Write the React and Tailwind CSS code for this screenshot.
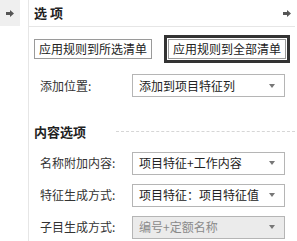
import React from "react";

const font = { fontFamily: '"Noto Sans CJK SC", "Noto Sans", sans-serif' };

function Arrow({ className }) {
  return (
    <svg width="8" height="7" viewBox="0 0 8 7" className={className}>
      <path d="M0 2h4V0l4 3.5L4 7V5H0z" fill="#555" />
    </svg>
  );
}

function Select({ value, disabled }) {
  return (
    <div
      className={`flex items-center w-[153px] h-[23px] border border-[#b5b5b5] pl-[6px] pr-[9px] ${
        disabled ? "bg-[#ebebeb] text-[#8a8a8a]" : "bg-white text-[#222]"
      }`}
    >
      <span className="flex-1 text-[12px] leading-none whitespace-nowrap">{value}</span>
      <svg width="6" height="4" viewBox="0 0 6 4">
        <path d="M0 0h6L3 4z" fill="#777" />
      </svg>
    </div>
  );
}

function Row({ label, value, disabled }) {
  return (
    <div className="flex items-center h-[23px]">
      <span className="w-[103px] pl-[11px] text-[12px] text-[#333] whitespace-nowrap">{label}</span>
      <Select value={value} disabled={disabled} />
    </div>
  );
}

export default function App() {
  return (
    <div className="w-[297px] h-[241px] bg-white flex overflow-hidden" style={font}>
      <div className="w-[28px] shrink-0">
        <div className="w-[20px] h-[26px] bg-[#efefef] flex items-center justify-center">
          <Arrow />
        </div>
      </div>
      <div className="flex-1 border-l border-[#e6e6e6] flex flex-col">
        <div className="h-[27px] flex items-center border-b border-[#e6e6e6] pl-[5px] pr-[4px] mr-[2px]">
          <span className="flex-1 text-[13px] font-bold text-[#222] tracking-[3px]">选项</span>
          <Arrow />
        </div>
        <div className="flex items-center pl-[5px] mt-[8px] gap-[12px]">
          <div className="h-[20px] px-[4px] border border-[#9a9a9a] bg-white flex items-center text-[12px] text-[#222] whitespace-nowrap">
            应用规则到所选清单
          </div>
          <div className="border-[3px] border-[#333] p-[1px]">
            <div className="h-[20px] px-[4px] border border-[#9a9a9a] bg-white flex items-center text-[12px] text-[#222] whitespace-nowrap">
              应用规则到全部清单
            </div>
          </div>
        </div>
        <div className="mt-[11px]">
          <Row label="添加位置:" value="添加到项目特征列" />
        </div>
        <div className="flex items-center mt-[25px] pl-[5px] pr-[2px]">
          <span className="text-[13px] font-bold text-[#222] whitespace-nowrap">内容选项</span>
          <div className="flex-1 ml-[30px] border-t border-dashed border-[#d6d6d6]" />
        </div>
        <div className="flex flex-col gap-[9px] mt-[10px]">
          <Row label="名称附加内容:" value="项目特征+工作内容" />
          <Row label="特征生成方式:" value="项目特征：项目特征值" />
          <Row label="子目生成方式:" value="编号+定额名称" disabled />
        </div>
      </div>
    </div>
  );
}
